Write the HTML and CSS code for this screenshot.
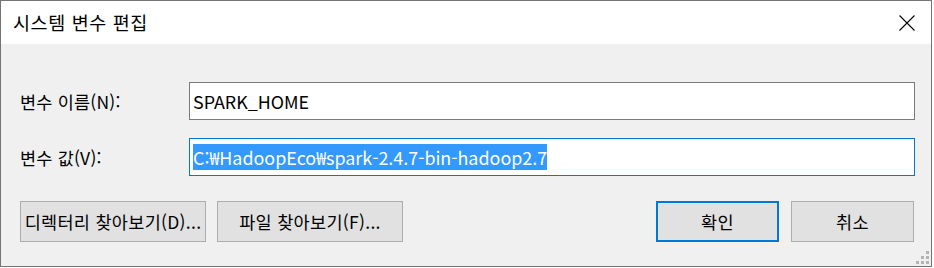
FILE: index.html
```html
<!DOCTYPE html>
<html lang="ko">
<head>
<meta charset="utf-8">
<link rel="stylesheet" href="styles.css">
</head>
<body>
<div class="window">
  <div class="titlebar">
    <span class="title">시스템 변수 편집</span>
    <span class="close">
      <svg width="16" height="16" viewBox="0 0 16 16"><path d="M0.5 0.5 L15.5 15.5 M15.5 0.5 L0.5 15.5" stroke="#000" stroke-width="1.1" fill="none"/></svg>
    </span>
  </div>
  <div class="content">
    <div class="fields">
      <label class="label">변수 이름(N):</label>
      <div class="field"><span class="value">SPARK_HOME</span></div>
      <label class="label">변수 값(V):</label>
      <div class="field focused"><span class="value selected">C:₩HadoopEco₩spark-2.4.7-bin-hadoop2.7</span></div>
    </div>
    <div class="buttons">
      <div class="left">
        <button class="btn wide">디렉터리 찾아보기(D)...</button>
        <button class="btn wide">파일 찾아보기(F)...</button>
      </div>
      <div class="right">
        <button class="btn small default">확인</button>
        <button class="btn small">취소</button>
      </div>
    </div>
    <div class="grip">
      <svg width="14" height="14" viewBox="0 0 14 14" fill="#b4b4b4">
        <rect x="10" y="0" width="3" height="3"/>
        <rect x="5" y="5" width="3" height="3"/><rect x="10" y="5" width="3" height="3"/>
        <rect x="0" y="10" width="3" height="3"/><rect x="5" y="10" width="3" height="3"/><rect x="10" y="10" width="3" height="3"/>
      </svg>
    </div>
  </div>
</div>
</body>
</html>
```
FILE: styles.css
```css
* { box-sizing: border-box; }
html, body { margin: 0; padding: 0; background: #ffffff; }
body {
  font-family: "Noto Sans CJK KR", "Noto Sans", sans-serif;
  color: #000;
  width: 934px;
  height: 268px;
  overflow: hidden;
}
.window {
  width: 932px;
  height: 267px;
  border: 1px solid #747474;
  display: flex;
  flex-direction: column;
  background: #f0f0f0;
}
.titlebar {
  height: 43px;
  background: #fff;
  display: flex;
  align-items: center;
  justify-content: space-between;
  padding: 0 16px 0 12px;
}
.title {
  font-size: 18.5px;
  letter-spacing: 0.6px;
  line-height: 1;
}
.close { display: flex; width: 16px; height: 16px; margin-top: 1px; }
.content {
  flex: 1;
  position: relative;
  padding: 38px 16px 0 19px;
}
.fields {
  display: grid;
  grid-template-columns: 169px 1fr;
  row-gap: 18px;
  align-items: center;
}
.label {
  font-size: 17.5px;
  letter-spacing: 0.2px;
  line-height: 1;
  padding-top: 1px;
}
.field {
  height: 38px;
  border: 1px solid #7a7a7a;
  background: #fff;
  display: flex;
  align-items: center;
  padding-left: 3px;
}
.field.focused { border-color: #0078d7; }
.value {
  font-family: "Noto Sans CJK KR", sans-serif;
  font-size: 17.9px;
  line-height: 26px;
  height: 26px;
}
.selected {
  background: #3399ff;
  color: #fff;
}
.buttons {
  margin-top: 25px;
  display: flex;
  justify-content: space-between;
}
.left, .right { display: flex; gap: 11px; }
.right { gap: 12px; margin-right: 1px; }
.btn {
  height: 41px;
  background: #e1e1e1;
  border: 1px solid #adadad;
  font-family: "Noto Sans CJK KR", sans-serif;
  font-size: 17.5px;
  letter-spacing: 0.3px;
  color: #000;
  padding: 0;
  line-height: 1;
  white-space: nowrap;
}
.btn.wide { width: 186px; }
.btn.small { width: 123px; }
.btn.default { border: 2px solid #0078d7; }
.grip {
  position: absolute;
  right: 1px;
  bottom: 1px;
  display: flex;
}
```
